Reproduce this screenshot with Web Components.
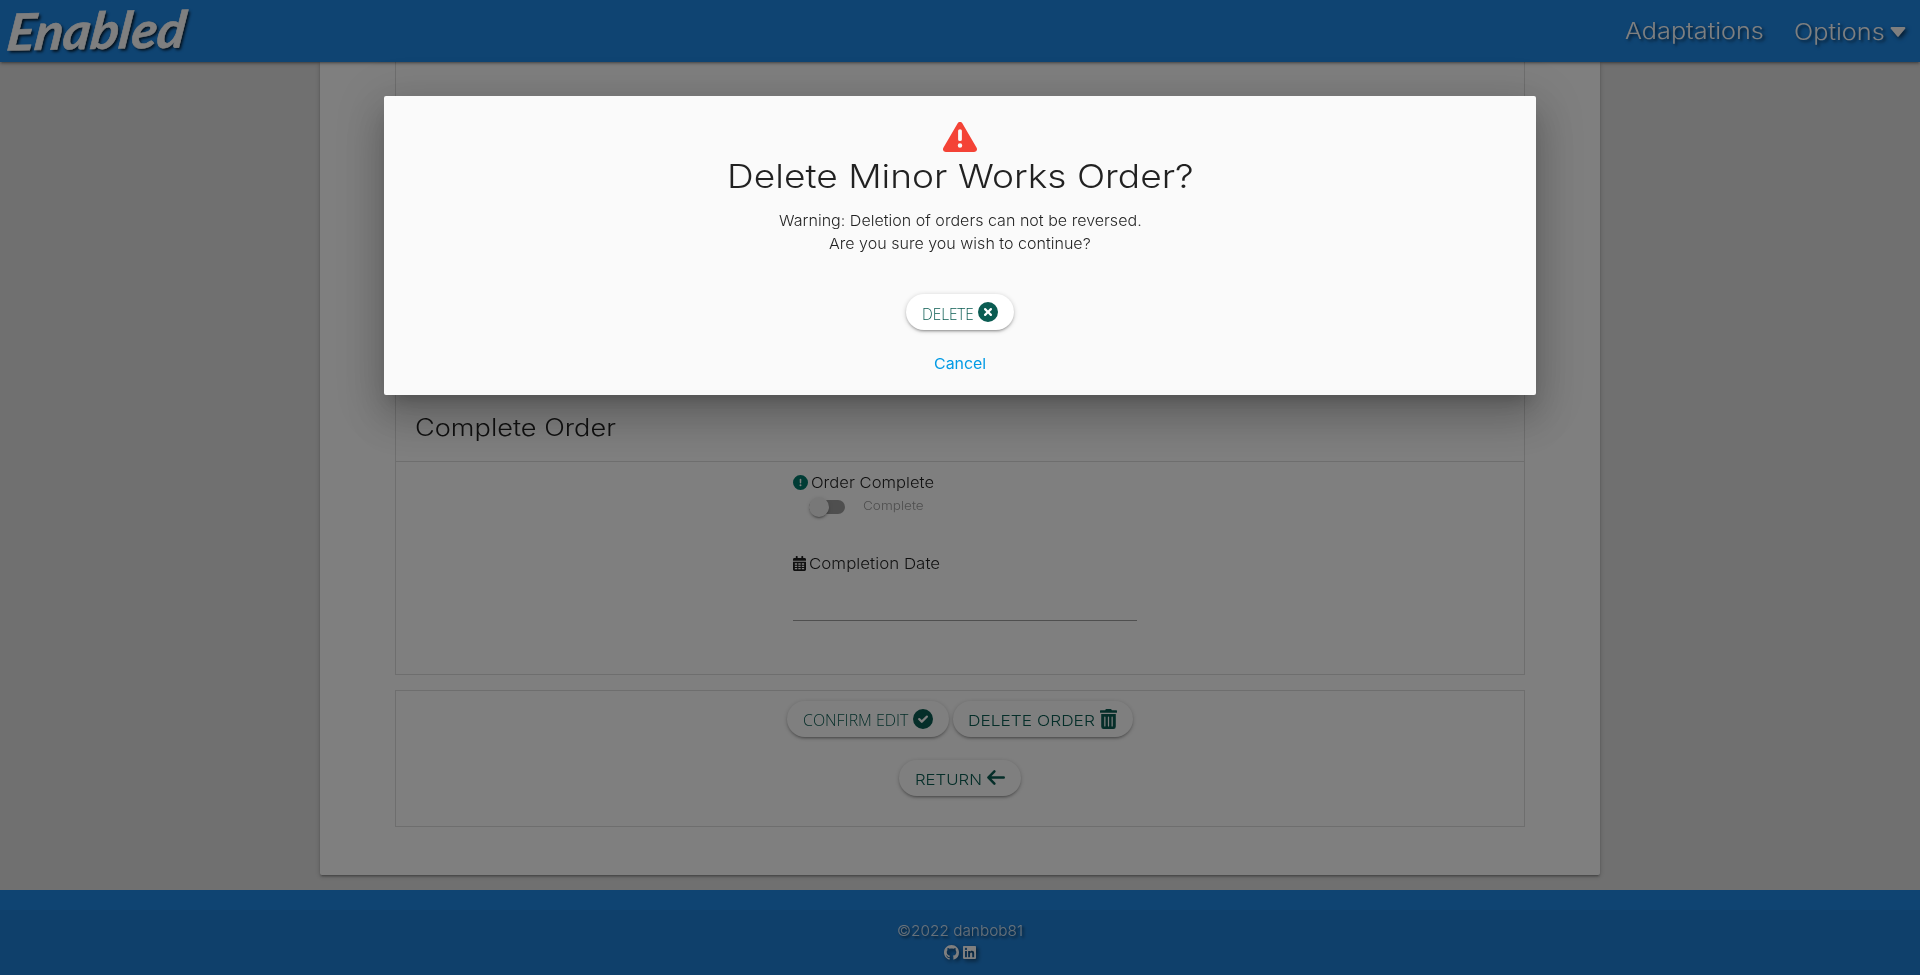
<!DOCTYPE html>
<html lang="en">
<head>
<meta charset="utf-8">
<title>Enabled</title>
<style>
html,body{margin:0;height:100%;overflow:hidden}
body{font-family:Inter,"Open Sans",sans-serif;font-weight:300;font-size:15px;line-height:22px;color:rgba(0,0,0,.87);background:#e0e0e0}
</style>
</head>
<body>
<enabled-app></enabled-app>
<script>
const define=(name,html,setup)=>customElements.define(name,class extends HTMLElement{
  connectedCallback(){
    if(this.shadowRoot)return;
    const t=document.createElement('template');t.innerHTML=html;
    this.attachShadow({mode:'open'}).append(t.content.cloneNode(true));
    if(setup)setup(this);
  }
});

/* Single line of text widened to a given width */
define('fit-text','<style>:host{display:inline-block;white-space:nowrap}span{display:inline-block;transform-origin:0 50%}</style><span><slot></slot></span>',el=>{
  const w=+el.getAttribute('w'),s=el.shadowRoot.querySelector('span');
  const nat=s.offsetWidth;
  el.style.width=w+'px';
  s.style.transform='scaleX('+(w/nat).toFixed(4)+')';
});

const icons={
 warn:['0 0 576 512','M569.5 440C588 472 564.800 512 527.900 512H48.100C11.100 512-12 471.900 6.500 440L246.400 24C264.900-8 311.100-8 329.600 24ZM288 362a38 38 0 1 0 0 76a38 38 0 0 0 0-76ZM256 150V300A32 26 0 0 0 320 300V150A32 26 0 0 0 256 150Z'],
 times:['0 0 20 20','M10 0A10 10 0 1 1 10 20A10 10 0 0 1 10 0ZM7.900 6.300L10 8.400L12.100 6.300A1.130 1.130 0 0 1 13.700 7.900L11.600 10L13.700 12.100A1.130 1.130 0 0 1 12.100 13.700L10 11.600L7.900 13.700A1.130 1.130 0 0 1 6.300 12.100L8.400 10L6.300 7.900A1.130 1.130 0 0 1 7.900 6.300Z'],
 check:['0 0 20 20','M10 0A10 10 0 1 1 10 20A10 10 0 0 1 10 0ZM13.200 6.700A1.150 1.150 0 0 1 14.800 8.300L9.600 13.500A1.150 1.150 0 0 1 8 13.500L5.300 10.800A1.150 1.150 0 0 1 6.900 9.200L8.800 11.100Z'],
 info:['0 0 512 512','M512 256A256 256 0 1 1 0 256A256 256 0 0 1 512 256ZM256 316a34 34 0 1 0 0 68a34 34 0 0 0 0-68ZM228 150L232 268A24 20 0 0 0 280 268L284 150A28 22 0 0 0 228 150Z'],
 calendar:['0 0 448 512','M0 464c0 26 22 48 48 48h352c26 0 48-22 48-48V192H0v272zM64 250h80v52H64zm120 0h80v52h-80zm120 0h80v52h-80zM64 330h80v48H64zm120 0h80v48h-80zm120 0h80v48h-80zM64 406h80v48H64zm120 0h80v48h-80zm120 0h80v48h-80zM400 64h-48V16c0-9-7-16-16-16h-32c-9 0-16 7-16 16v48H160V16c0-9-7-16-16-16h-32c-9 0-16 7-16 16v48H48C22 64 0 86 0 112v48h448v-48c0-26-22-48-48-48z'],
 trash:['0 0 448 512','M32 448a64 64 0 0 0 64 64h256a64 64 0 0 0 64-64V128H32zM304 208a16 16 0 0 1 32 0v224a16 16 0 0 1-32 0zM208 208a16 16 0 0 1 32 0v224a16 16 0 0 1-32 0zM112 208a16 16 0 0 1 32 0v224a16 16 0 0 1-32 0zM432 32H312L303 13A24 24 0 0 0 281 0H167A24 24 0 0 0 145 13L136 32H16A16 16 0 0 0 0 48v32a16 16 0 0 0 16 16h416a16 16 0 0 0 16-16V48a16 16 0 0 0-16-16z'],
 arrow:['0 0 18 15','M0.400 6.700L6.500 0.500A1.250 1.250 0 0 1 8.300 2.300L4.400 6.200H16.700A1.250 1.250 0 0 1 16.700 8.800H4.400L8.300 12.700A1.250 1.250 0 0 1 6.500 14.500L0.400 8.300A1.200 1.200 0 0 1 0.400 6.700Z'],
 caret:['0 0 320 192','M31.300 0h257.300c17.800 0 26.700 21.500 14.100 34.100L174.100 180c-7.800 7.800-20.500 7.800-28.300 0L17.200 34.100C4.600 21.500 13.500 0 31.300 0z'],
 linkedin:['0 32 448 448','M416 32H31.900C14.300 32 0 46.500 0 64.300v383.400C0 465.500 14.300 480 31.900 480H416c17.600 0 32-14.500 32-32.300V64.300c0-17.800-14.400-32.300-32-32.300zM135.400 416H69V202.200h66.500V416zm-33.200-243c-21.300 0-38.500-17.300-38.500-38.500S80.900 96 102.200 96c21.200 0 38.500 17.300 38.500 38.500 0 21.300-17.200 38.500-38.500 38.500zm282.100 243h-66.400V312c0-24.800-.5-56.700-34.500-56.700-34.600 0-39.900 27-39.900 54.900V416h-66.400V202.200h63.700v29.200h.9c8.900-16.800 30.600-34.500 62.900-34.500 67.200 0 79.700 44.300 79.700 101.900V416z'],
 github:['0 0 16 16','M8 0C3.580 0 0 3.580 0 8c0 3.540 2.290 6.530 5.470 7.590.4.070.55-.17.55-.38 0-.19-.01-.82-.01-1.490-2.010.37-2.530-.49-2.690-.94-.09-.23-.48-.94-.82-1.130-.28-.15-.68-.52-.01-.53.63-.01 1.080.58 1.230.82.720 1.210 1.870.87 2.330.66.070-.52.280-.87.510-1.070-1.780-.2-3.640-.89-3.640-3.950 0-.87.310-1.590.820-2.150-.08-.2-.36-1.020.08-2.120 0 0 .67-.21 2.200.82.640-.18 1.320-.27 2-.27s1.360.09 2 .27c1.530-1.040 2.200-.82 2.200-.82.440 1.100.160 1.920.080 2.120.510.560.820 1.270.820 2.150 0 3.070-1.870 3.750-3.650 3.950.290.250.540.730.540 1.480 0 1.070-.01 1.930-.01 2.200 0 .210.150.460.550.380A8.010 8.010 0 0 0 16 8c0-4.420-3.580-8-8-8z']
};
define('fa-icon','<style>:host{display:block;flex:none}svg{display:block;width:100%;height:100%;overflow:visible}</style><svg preserveAspectRatio="none"><path fill="currentColor" fill-rule="evenodd"/></svg>',el=>{
  const [vb,d]=icons[el.getAttribute('name')];
  el.shadowRoot.querySelector('svg').setAttribute('viewBox',vb);
  el.shadowRoot.querySelector('path').setAttribute('d',d);
  el.style.width=el.getAttribute('w')+'px';el.style.height=el.getAttribute('h')+'px';
});

define('pill-button',`<style>
:host{display:flex;box-sizing:border-box;height:36px;border-radius:18px;background:#fff;color:#0b5c52;padding:0 16px;justify-content:space-between;line-height:39px;
box-shadow:0 2px 2px 0 rgba(0,0,0,.14),0 3px 1px -2px rgba(0,0,0,.12),0 1px 5px 0 rgba(0,0,0,.2)}
</style><slot></slot>`);

define('nav-bar',`<style>
:host{display:flex;position:relative;height:62px;background:#1e88e5;color:#fff;justify-content:space-between;box-shadow:0 2px 2px 0 rgba(0,0,0,.14),0 3px 1px -2px rgba(0,0,0,.12),0 1px 5px 0 rgba(0,0,0,.2);font-size:22.500px;font-weight:350}
.logo{margin-left:8px;font:italic 700 51px/60px Lato,sans-serif;text-shadow:2px 2px 3px rgba(0,0,0,.8);transform:skewX(-8deg) rotate(-1deg);-webkit-text-stroke:.6px #fff}
nav{display:flex;line-height:61px;text-shadow:2px 2px 3px rgba(0,0,0,.6);padding-right:14px}
.a{margin-right:30px}.o{line-height:63px}
fa-icon{margin:27px 0 0 5px;filter:drop-shadow(2px 2px 2px rgba(0,0,0,.6))}
</style><fit-text class="logo" w="178">Enabled</fit-text>
<nav><fit-text class="a" w="139">Adaptations</fit-text><fit-text class="o" w="91">Options</fit-text><fa-icon name="caret" w="16" h="10"></fa-icon></nav>`);

define('toggle-switch',`<style>
:host{display:flex;height:20px;padding-left:16px;color:#9e9e9e;font-size:12px;line-height:17px}
.track{width:36px;height:14px;border-radius:15px;background:rgba(0,0,0,.38);margin-top:3px}
.knob{width:20px;height:20px;border-radius:50%;background:#f1f1f1;margin-top:-3px;box-shadow:0 3px 1px -2px rgba(0,0,0,.2),0 2px 2px 0 rgba(0,0,0,.14),0 1px 5px 0 rgba(0,0,0,.12)}
fit-text{margin-left:18px}
</style><div class="track"><div class="knob"></div></div><fit-text w="61">Complete</fit-text>`);

define('order-card',`<style>
:host{display:block;box-sizing:border-box;width:1280px;height:813px;margin:0 auto;background:#fff;border-radius:0 0 2px 2px;padding:0 75px;box-shadow:0 2px 2px 0 rgba(0,0,0,.14),0 3px 1px -2px rgba(0,0,0,.12),0 1px 5px 0 rgba(0,0,0,.2)}
section{box-sizing:border-box;border:1px solid #ddd}
.main{height:613px;border-top:0}
header{box-sizing:border-box;height:400px;padding:349px 0 0 19px;border-bottom:1px solid #ddd;font-size:23.500px;line-height:34px}
.fields{width:344px;margin-left:397px;padding-top:10px}
.label{display:flex;height:22px;gap:3px}
.date{margin-top:36px}
.line{height:45px;border-bottom:1px solid #9e9e9e}
.actions{margin-top:15px;height:137px;padding-top:10px}
.row{display:flex;gap:4px;justify-content:center;margin-bottom:23px}
.seg{font:350 15.500px/39px "Open Sans"}
</style>
<section class="main"><header><fit-text w="201">Complete Order</fit-text></header>
<div class="fields">
<div class="label"><fa-icon name="info" w="15" h="15" style="color:#00796b;margin-top:3px"></fa-icon><fit-text w="123">Order Complete</fit-text></div>
<toggle-switch style="margin-top:3px">Complete</toggle-switch>
<div class="label date"><fa-icon name="calendar" w="13" h="15" style="margin-top:3px"></fa-icon><fit-text w="131">Completion Date</fit-text></div>
<div class="line"></div></div></section>
<section class="actions">
<div class="row"><pill-button style="width:162px"><fit-text class="seg" w="106">CONFIRM EDIT</fit-text><fa-icon name="check" w="20" h="20" style="margin-top:8px"></fa-icon></pill-button>
<pill-button style="width:180px;padding-left:15px"><fit-text w="127">DELETE ORDER</fit-text><fa-icon name="trash" w="17" h="20" style="margin-top:8px"></fa-icon></pill-button></div>
<div class="row"><pill-button style="width:122px"><fit-text w="67">RETURN</fit-text><fa-icon name="arrow" w="18" h="15" style="margin-top:10px"></fa-icon></pill-button></div>
</section>`);

define('page-footer',`<style>
:host{display:block;margin-top:15px;height:85px;background:#1e88e5;padding-top:20px;box-sizing:border-box;color:rgba(255,255,255,.8)}
.copy{background:rgba(51,51,51,.08);height:65px;padding-top:10px;box-sizing:border-box;display:flex;flex-direction:column;align-items:center;text-shadow:2px 2px 3px rgba(0,0,0,.6);font-weight:350}
.icons{display:flex;gap:4px;margin-top:3px;color:#fff;filter:drop-shadow(2px 2px 2px rgba(0,0,0,.6))}
</style><div class="copy"><fit-text w="126">©2022 danbob81</fit-text><div class="icons"><fa-icon name="github" w="15" h="15"></fa-icon><fa-icon name="linkedin" w="13" h="13" style="margin-top:1px"></fa-icon></div></div>`);

define('confirm-modal',`<style>
:host{display:flex;flex-direction:column;align-items:center;box-sizing:border-box;width:1152px;height:299px;padding-top:26px;background:#fafafa;border-radius:2px;
box-shadow:0 24px 38px 3px rgba(0,0,0,.14),0 9px 46px 8px rgba(0,0,0,.12),0 11px 15px -7px rgba(0,0,0,.2)}
.title{font-size:33px;line-height:46px;margin-top:1px}
.text{line-height:23px}
.warning{color:#f44336}
pill-button{margin-top:39px;width:108px}
.seg{font:350 15.500px/40px "Open Sans"}
.cancel{color:#039be5;font-weight:400;margin-top:23px}
</style>
<fa-icon class="warning" name="warn" w="34" h="30"></fa-icon>
<fit-text class="title" w="467">Delete Minor Works Order?</fit-text>
<fit-text class="text" w="363" style="margin-top:10px">Warning: Deletion of orders can not be reversed.</fit-text>
<fit-text class="text" w="262">Are you sure you wish to continue?</fit-text>
<pill-button><fit-text class="seg" w="52">DELETE</fit-text><fa-icon name="times" w="20" h="20" style="margin-top:8px"></fa-icon></pill-button>
<fit-text class="cancel" w="52">Cancel</fit-text>`);

define('enabled-app',`<style>
:host{display:block;height:975px}
.overlay{position:absolute;inset:0;background:rgba(0,0,0,.5);display:flex;justify-content:center;align-items:flex-start;padding-top:96px}
</style><nav-bar></nav-bar><order-card></order-card><page-footer></page-footer>
<div class="overlay"><confirm-modal></confirm-modal></div>`);
</script>
</body>
</html>
